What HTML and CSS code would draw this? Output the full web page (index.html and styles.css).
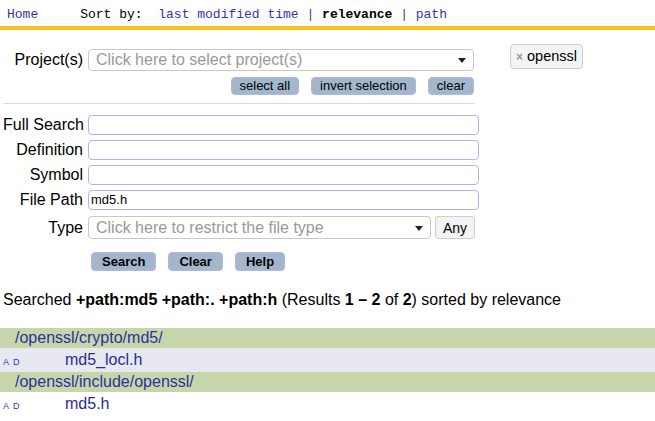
FILE: index.html
```html
<!DOCTYPE html>
<html>
<head>
<meta charset="utf-8">
<link rel="stylesheet" href="styles.css">
</head>
<body>
<div class="topbar">
  <a class="home">Home</a>
  <span class="sort">Sort by:&nbsp; <a>last modified time</a> <span class="pipe">|</span> <b>relevance</b> <span class="pipe">|</span> <a>path</a></span>
</div>
<div class="main">
  <div class="form">
    <div class="row project-row">
      <label class="lbl">Project(s)</label>
      <div class="select project-select"><span class="ph">Click here to select project(s)</span><span class="arrow"></span></div>
    </div>
    <div class="pbtns">
      <button class="sbtn">select all</button>
      <button class="sbtn">invert selection</button>
      <button class="sbtn">clear</button>
    </div>
    <div class="rule"></div>
    <div class="row field-row">
      <label class="lbl">Full Search</label>
      <div class="input"></div>
    </div>
    <div class="row field-row">
      <label class="lbl">Definition</label>
      <div class="input"></div>
    </div>
    <div class="row field-row">
      <label class="lbl">Symbol</label>
      <div class="input"></div>
    </div>
    <div class="row field-row">
      <label class="lbl">File Path</label>
      <div class="input"><span class="val">md5.h</span></div>
    </div>
    <div class="row type-row">
      <label class="lbl">Type</label>
      <div class="select type-select"><span class="ph">Click here to restrict the file type</span><span class="arrow"></span></div>
      <button class="any">Any</button>
    </div>
    <div class="actions">
      <button class="abtn">Search</button>
      <button class="abtn">Clear</button>
      <button class="abtn">Help</button>
    </div>
  </div>
  <div class="tag"><span class="x">×</span>openssl</div>
</div>
<p class="summary">Searched <b>+path:md5 +path:. +path:h</b> (Results <b>1 – 2</b> of <b>2</b>) sorted by relevance</p>
<div class="results">
  <div class="dir">/openssl/crypto/md5/</div>
  <div class="file alt"><span class="ad">A D</span><a>md5_locl.h</a></div>
  <div class="dir">/openssl/include/openssl/</div>
  <div class="file"><span class="ad">A D</span><a>md5.h</a></div>
</div>
</body>
</html>
```
FILE: styles.css
```css
body {
  margin: 0;
  font-family: "Liberation Sans", Arial, sans-serif;
  font-size: 16px;
  color: #000;
  background: #fff;
}
.topbar {
  height: 19px;
  padding: 7px 0 0 7px;
  border-bottom: 4px solid #f7c11c;
  font-family: "Liberation Mono", "Courier New", monospace;
  font-size: 13px;
  line-height: 15px;
  display: flex;
  white-space: pre;
}
.topbar a { color: #3434b4; }
.topbar .home { color: #333399; }
.sort { margin-left: 42px; }
.pipe { color: #3434b4; }
.topbar b { color: #000; }

.main {
  display: flex;
  align-items: flex-start;
  padding: 14px 0 0 3px;
}
.form { width: 476px; }
.row { display: flex; align-items: center; }
.lbl {
  width: 80px;
  margin-right: 5px;
  text-align: right;
  white-space: nowrap;
}
.project-row { margin-top: 5px; }
.select {
  position: relative;
  box-sizing: border-box;
  border: 1px solid #c8c8c8;
  border-radius: 4px;
  background: #fff;
  height: 22px;
  padding-left: 7px;
  line-height: 20px;
}
.project-select { width: 386px; }
.type-select { width: 343px; height: 23px; line-height: 21px; }
.ph { color: #999; }
.arrow {
  position: absolute;
  top: 50%;
  right: 7px;
  margin-top: -2px;
  border-style: solid;
  border-width: 5px 4px 0 4px;
  border-color: #222 transparent transparent transparent;
}
.pbtns {
  display: flex;
  justify-content: flex-end;
  gap: 12px;
  width: 471px;
  margin-top: 6px;
}
.sbtn {
  height: 18px;
  padding: 0 8px;
  font-family: "Liberation Sans", Arial, sans-serif;
  font-size: 13px;
  line-height: 16px;
  color: #000;
  background: #a3b7cc;
  border: 1px solid #b4b4e8;
  border-radius: 4px;
}
.rule {
  width: 472px;
  height: 1px;
  background: #dcdcdc;
  margin-top: 8px;
}
.field-row { margin-top: 5px; }
.rule + .field-row { margin-top: 11px; }
.input {
  box-sizing: border-box;
  width: 391px;
  height: 20px;
  border: 1px solid #b0b0ff;
  border-radius: 4px;
  padding-left: 2px;
  font-size: 13px;
  line-height: 18px;
}
.type-row { margin-top: 6px; }
.any {
  margin-left: 4px;
  width: 40px;
  height: 23px;
  padding: 0;
  font-family: "Liberation Sans", Arial, sans-serif;
  font-size: 14px;
  color: #000;
  background: #f3f3f3;
  border: 1px solid #cfcfcf;
  border-radius: 3px;
}
.actions {
  display: flex;
  gap: 12px;
  margin: 13px 0 0 88px;
}
.abtn {
  height: 19px;
  padding: 0 10px;
  font-family: "Liberation Sans", Arial, sans-serif;
  font-size: 13px;
  font-weight: bold;
  line-height: 17px;
  color: #000;
  background: #a3b7cc;
  border: 1px solid #b4b4e8;
  border-radius: 4px;
}
.tag {
  margin-left: 31px;
  box-sizing: border-box;
  height: 25px;
  padding: 0 5px 0 5px;
  border: 1px solid #cccccc;
  border-radius: 4px;
  background: #f4f4f4;
  font-size: 14.5px;
  line-height: 22px;
  white-space: nowrap;
}
.tag .x {
  color: #999;
  font-weight: bold;
  font-size: 12px;
  margin-right: 4px;
}
.summary {
  margin: 20px 0 0 3px;
  line-height: 18px;
}
.results { margin-top: 19px; }
.dir {
  height: 20px;
  box-sizing: border-box;
  padding-left: 15px;
  line-height: 19px;
  background: #c6d6aa;
  color: #30309a;
}
.file {
  display: flex;
  align-items: baseline;
  height: 24px;
  line-height: 23px;
  padding-left: 3px;
}
.file.alt { background: #e8e8f0; }
.file a { color: #2a2a9a; }
.ad {
  width: 62px;
  font-size: 9px;
  letter-spacing: 1px;
  color: #3333cc;
}
```
